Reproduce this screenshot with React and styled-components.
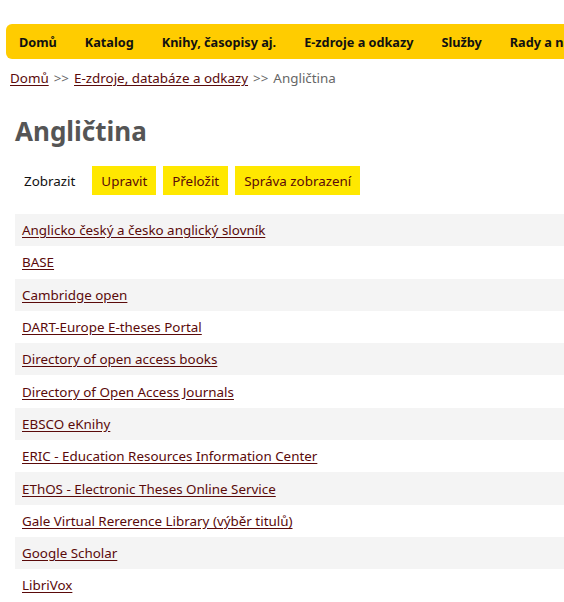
import React from "react";
import styled, { createGlobalStyle } from "styled-components";

const Global = createGlobalStyle`
  html, body { margin: 0; padding: 0; background: #fff; }
  body { font-family: "Noto Sans", "DejaVu Sans", sans-serif; font-size: 13.4px; color: #222; overflow: hidden; }
`;

const Page = styled.div`
  width: 564px;
  height: 602px;
  overflow: hidden;
  padding-top: 24px;
  box-sizing: border-box;
`;

const Nav = styled.nav`
  margin-left: 6px;
  height: 35px;
  background: #ffcc00;
  border-radius: 6px 0 0 6px;
  display: flex;
  align-items: center;
  padding-left: 13px;
  gap: 28px;
  white-space: nowrap;
  overflow: hidden;
`;

const NavItem = styled.a`
  font-weight: 700;
  font-size: 12.7px;
  color: #111;
  text-decoration: none;
`;

const Crumbs = styled.div`
  padding: 8px 0 0 10px;
  height: 22px;
  color: #666;
  display: flex;
  gap: 5px;
  align-items: center;
`;

const Link = styled.a`
  color: #5a0a0a;
  text-decoration: underline;
  text-underline-offset: 2px;
`;

const Title = styled.h1`
  margin: 25px 0 0 15px;
  font-size: 26px;
  font-weight: 700;
  color: #555;
  line-height: 34px;
`;

const Tabs = styled.div`
  display: flex;
  gap: 7px;
  margin: 18px 0 0 15px;
  height: 29px;
`;

const Tab = styled.a`
  display: flex;
  align-items: center;
  padding: 0 9px;
  margin-right: ${p => (p.$active ? "1px" : "0")};
  color: ${p => (p.$active ? "#111" : "#5a0a0a")};
  background: ${p => (p.$active ? "transparent" : "#ffe800")};
  text-decoration: none;
`;

const List = styled.ul`
  list-style: none;
  margin: 19px 0 0 15px;
  padding: 0;
`;

const Row = styled.li`
  height: 32.3px;
  display: flex;
  align-items: center;
  padding-left: 7px;
  background: ${p => (p.$odd ? "#f4f4f4" : "#fff")};
`;

const items = [
  "Anglicko český a česko anglický slovník",
  "BASE",
  "Cambridge open",
  "DART-Europe E-theses Portal",
  "Directory of open access books",
  "Directory of Open Access Journals",
  "EBSCO eKnihy",
  "ERIC - Education Resources Information Center",
  "EThOS - Electronic Theses Online Service",
  "Gale Virtual Rererence Library (výběr titulů)",
  "Google Scholar",
  "LibriVox",
];

export default function App() {
  return (
    <Page>
      <Global />
      <Nav>
        {["Domů", "Katalog", "Knihy, časopisy aj.", "E-zdroje a odkazy", "Služby", "Rady a návody"].map(n => (
          <NavItem key={n}>{n}</NavItem>
        ))}
      </Nav>
      <Crumbs>
        <Link>Domů</Link>
        <span>&gt;&gt;</span>
        <Link>E-zdroje, databáze a odkazy</Link>
        <span>&gt;&gt;</span>
        <span>Angličtina</span>
      </Crumbs>
      <Title>Angličtina</Title>
      <Tabs>
        <Tab $active>Zobrazit</Tab>
        <Tab>Upravit</Tab>
        <Tab>Přeložit</Tab>
        <Tab>Správa zobrazení</Tab>
      </Tabs>
      <List>
        {items.map((t, i) => (
          <Row key={t} $odd={i % 2 === 0}>
            <Link>{t}</Link>
          </Row>
        ))}
        <Row $odd />
      </List>
    </Page>
  );
}
